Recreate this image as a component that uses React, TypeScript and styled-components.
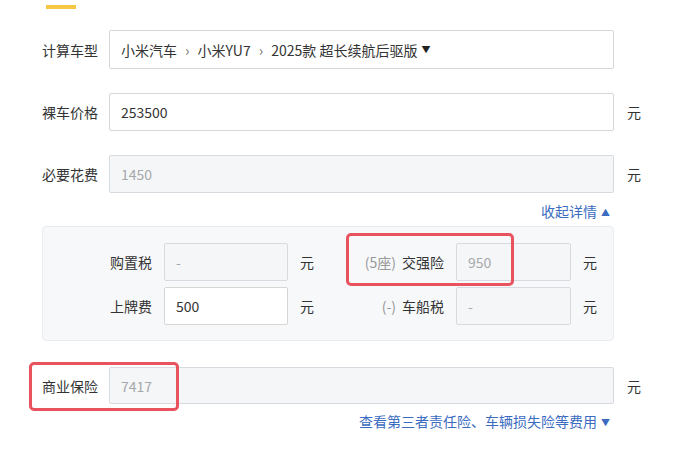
import React from "react";
import styled, { createGlobalStyle } from "styled-components";

const Global = createGlobalStyle`
  * { box-sizing: border-box; }
  html, body { margin: 0; padding: 0; background: #fff; }
  body {
    font-family: "Noto Sans CJK SC", "Noto Sans", sans-serif;
    font-size: 14px;
    color: #333;
  }
`;

const Page = styled.div`
  width: 690px;
  height: 472px;
  padding-top: 5px;
  background: #fff;
`;

const TabMark = styled.div`
  margin-left: 46px;
  width: 30px;
  height: 4px;
  background: #f6c744;
`;

const Form = styled.div`
  margin: 21px 0 0 42px;
  width: 620px;
`;

const Row = styled.div<{ $mt?: number }>`
  position: relative;
  display: grid;
  grid-template-columns: 67px 505px auto;
  align-items: center;
  margin-top: ${(p) => p.$mt ?? 0}px;
`;

const Label = styled.div`
  font-size: 14px;
  color: #333;
  white-space: nowrap;
`;

const Box = styled.div<{ $h?: number; $disabled?: boolean; $muted?: boolean }>`
  height: ${(p) => p.$h ?? 38}px;
  border: 1px solid ${(p) => (p.$disabled ? "#d7dbe0" : "#d6d6d6")};
  border-radius: 2px;
  background: ${(p) => (p.$disabled ? "#f5f6f8" : "#fff")};
  color: ${(p) => (p.$muted ? "#a6a8ab" : "#333")};
  display: flex;
  align-items: center;
  padding-left: 11px;
  font-size: 14px;
  white-space: nowrap;
`;

const Sep = styled.span`
  color: #777;
  margin: 0 8px;
  font-size: 15px;
`;

const Caret = styled.span`
  font-size: 9px;
  margin-left: 4px;
  color: #222;
`;

const Unit = styled.div`
  margin-left: 13px;
  font-size: 14px;
  color: #333;
`;

const LinkLine = styled.div<{ $mt: number }>`
  width: 572px;
  margin-top: ${(p) => p.$mt}px;
  text-align: right;
  padding-right: 4px;
  line-height: 20px;
  font-size: 14px;
  color: #3b6cc0;
`;

const Tri = styled.span`
  font-size: 9px;
  margin-left: 4px;
  vertical-align: 1px;
`;

const Panel = styled.div`
  position: relative;
  margin-top: 3px;
  width: 572px;
  border: 1px solid #e9ebef;
  border-radius: 4px;
  background: #f7f8fa;
  padding: 16px 0 15px 0;
  display: grid;
  grid-template-columns: 109px 124px 14px 118px 115px 14px;
  column-gap: 12px;
  row-gap: 6px;
  align-items: center;
`;

const PanelLabel = styled.div`
  text-align: right;
  font-size: 14px;
  color: #333;
  white-space: nowrap;
`;

const Hint = styled.span`
  color: #999;
  margin-right: 6px;
`;

const Highlight = styled.div<{ $l: number; $t: number; $w: number; $h: number }>`
  position: absolute;
  left: ${(p) => p.$l}px;
  top: ${(p) => p.$t}px;
  width: ${(p) => p.$w}px;
  height: ${(p) => p.$h}px;
  border: 3px solid #e8535e;
  border-radius: 5px;
  pointer-events: none;
`;

export default function App() {
  return (
    <Page>
      <Global />
      <TabMark />
      <Form>
        <Row>
          <Label>计算车型</Label>
          <Box $h={39}>
            小米汽车<Sep>›</Sep>小米YU7<Sep>›</Sep>2025款 超长续航后驱版<Caret>▼</Caret>
          </Box>
        </Row>
        <Row $mt={24}>
          <Label>裸车价格</Label>
          <Box>253500</Box>
          <Unit>元</Unit>
        </Row>
        <Row $mt={24}>
          <Label>必要花费</Label>
          <Box $disabled $muted>1450</Box>
          <Unit>元</Unit>
        </Row>
        <LinkLine $mt={8}>
          收起详情<Tri>▲</Tri>
        </LinkLine>
        <Panel>
          <PanelLabel>购置税</PanelLabel>
          <Box $disabled $muted>-</Box>
          <Label>元</Label>
          <PanelLabel>
            <Hint>(5座)</Hint>交强险
          </PanelLabel>
          <Box $disabled $muted>950</Box>
          <Label>元</Label>

          <PanelLabel>上牌费</PanelLabel>
          <Box>500</Box>
          <Label>元</Label>
          <PanelLabel>
            <Hint>(-)</Hint>车船税
          </PanelLabel>
          <Box $disabled $muted>-</Box>
          <Label>元</Label>
          <Highlight $l={303} $t={6} $w={168} $h={53} />
        </Panel>
        <Row $mt={26}>
          <Label>商业保险</Label>
          <Box $h={37} $disabled $muted>7417</Box>
          <Unit>元</Unit>
          <Highlight $l={-13} $t={-5} $w={150} $h={49} />
        </Row>
        <LinkLine $mt={7}>
          查看第三者责任险、车辆损失险等费用<Tri>▼</Tri>
        </LinkLine>
      </Form>
    </Page>
  );
}
